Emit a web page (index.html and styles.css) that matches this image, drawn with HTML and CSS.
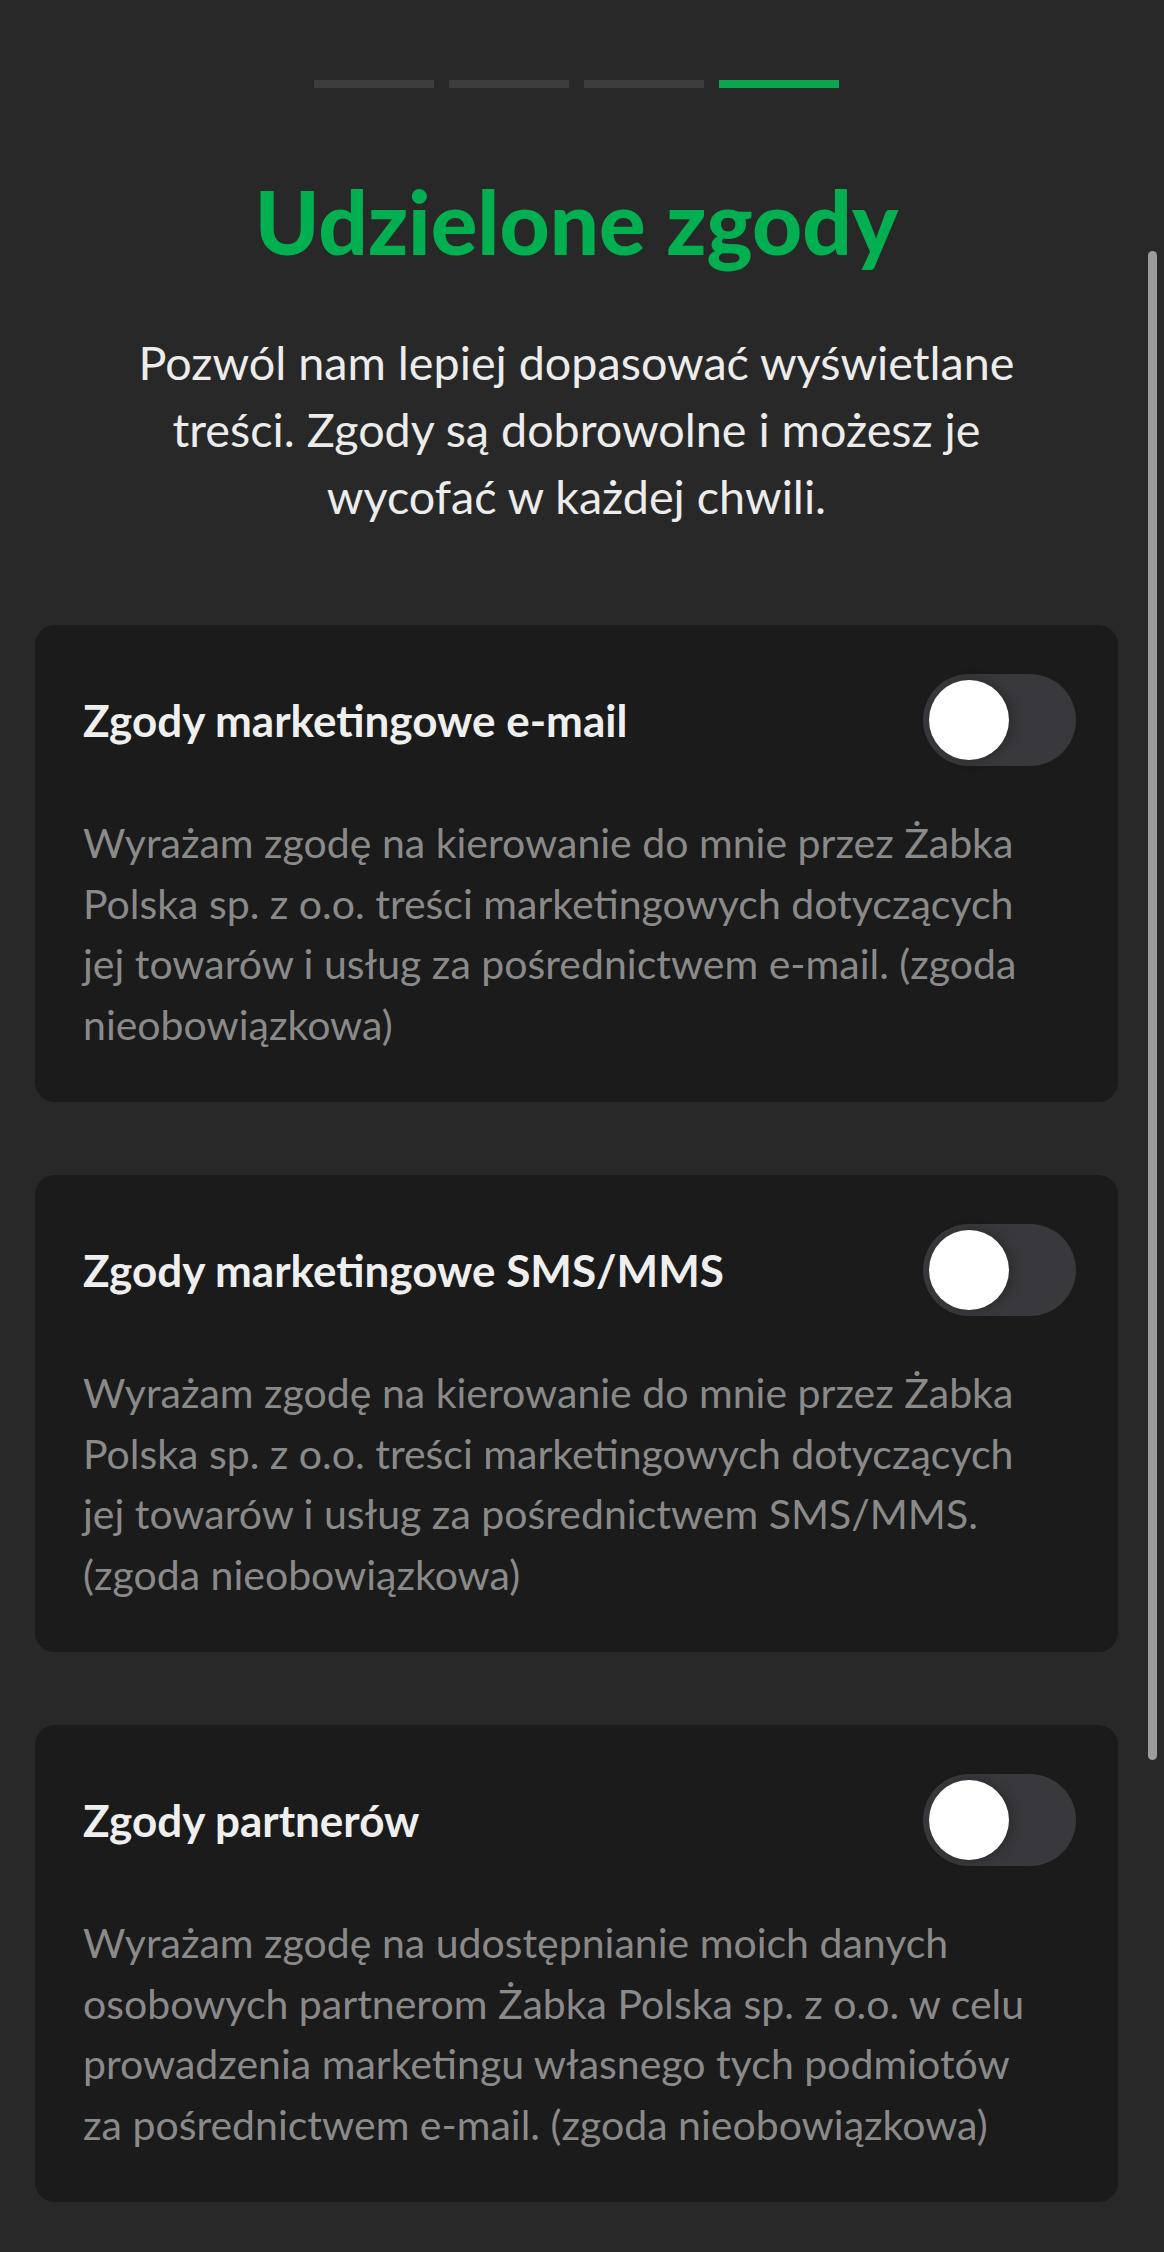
FILE: index.html
```html
<!DOCTYPE html>
<html lang="pl">
<head>
    <meta charset="UTF-8">
    <meta name="viewport" content="width=device-width, initial-scale=1.0">
    <title>Udzielone zgody</title>
    <link rel="stylesheet" href="styles.css">
</head>
<body>
  <div class="page">
    <div class="steps">
      <span class="step"></span>
      <span class="step"></span>
      <span class="step"></span>
      <span class="step active"></span>
    </div>

    <h1 class="headline">Udzielone zgody</h1>
    <p class="intro">Pozwól nam lepiej dopasować wyświetlane treści. Zgody są dobrowolne i możesz je wycofać w każdej chwili.</p>

    <div class="consent">
      <div class="consent-head">
        <h2>Zgody marketingowe e-mail</h2>
        <span class="switch"><span class="knob"></span></span>
      </div>
      <p class="consent-text">Wyrażam zgodę na kierowanie do mnie przez Żabka Polska sp. z o.o. treści marketingowych dotyczących jej towarów i usług za pośrednictwem e-mail. (zgoda nieobowiązkowa)</p>
    </div>

    <div class="consent">
      <div class="consent-head">
        <h2>Zgody marketingowe SMS/MMS</h2>
        <span class="switch"><span class="knob"></span></span>
      </div>
      <p class="consent-text">Wyrażam zgodę na kierowanie do mnie przez Żabka Polska sp. z o.o. treści marketingowych dotyczących jej towarów i usług za pośrednictwem SMS/MMS. (zgoda nieobowiązkowa)</p>
    </div>

    <div class="consent">
      <div class="consent-head">
        <h2>Zgody partnerów</h2>
        <span class="switch"><span class="knob"></span></span>
      </div>
      <p class="consent-text">Wyrażam zgodę na udostępnianie moich danych osobowych partnerom Żabka Polska sp. z o.o. w celu prowadzenia marketingu własnego tych podmiotów za pośrednictwem e-mail. (zgoda nieobowiązkowa)</p>
    </div>
  </div>
  <div class="scroll-thumb"></div>
</body>
</html>
```

FILE: styles.css
```css
body {
  margin: 0;
  padding: 0;
  background-color: #282828;
  font-family: Lato, "Liberation Sans", sans-serif;
  color: #ececec;
  }
.page {
  padding: 80px 46px 40px 35px;
  }
.steps {
  display: flex;
  justify-content: center;
  gap: 15px;
  }
.step {
  width: 120px;
  height: 8px;
  background-color: #3d3d3d;
  }
.step.active {
  background-color: #0aa64f;
  }
.headline {
  margin: 90px 0 0;
  text-align: center;
  font-size: 87px;
  font-weight: 900;
  line-height: 1;
  color: #00b050;
  }
.intro {
  max-width: 920px;
  margin: 64px auto 0;
  text-align: center;
  font-size: 46.7px;
  line-height: 67px;
  color: #ececec;
  }
.consent {
  margin-top: 95px;
  padding: 49px 42px 47px 48px;
  background-color: #1b1b1b;
  border-radius: 20px;
  }
.consent + .consent {
  margin-top: 73px;
  }
.consent-head {
  display: flex;
  align-items: center;
  justify-content: space-between;
  }
.consent-head h2 {
  margin: 0;
  font-size: 44px;
  font-weight: 700;
  color: #efefef;
  }
.switch {
  display: flex;
  align-items: center;
  width: 153px;
  height: 92px;
  padding: 0 6px;
  box-sizing: border-box;
  border-radius: 46px;
  background-color: #39393d;
  }
.knob {
  width: 80px;
  height: 80px;
  border-radius: 50%;
  background-color: #fff;
  box-shadow: 4px 0 12px rgba(0, 0, 0, 0.25);
  }
.consent-text {
  max-width: 965px;
  margin: 47px 0 0;
  font-size: 41px;
  line-height: 60.5px;
  color: #8a8a8a;
  }
/* nakladany pasek przewijania */
.scroll-thumb {
  position: absolute;
  left: 1148px;
  top: 251px;
  width: 9px;
  height: 1509px;
  border-radius: 5px;
  background-color: #9b9b9b;
  }
```
